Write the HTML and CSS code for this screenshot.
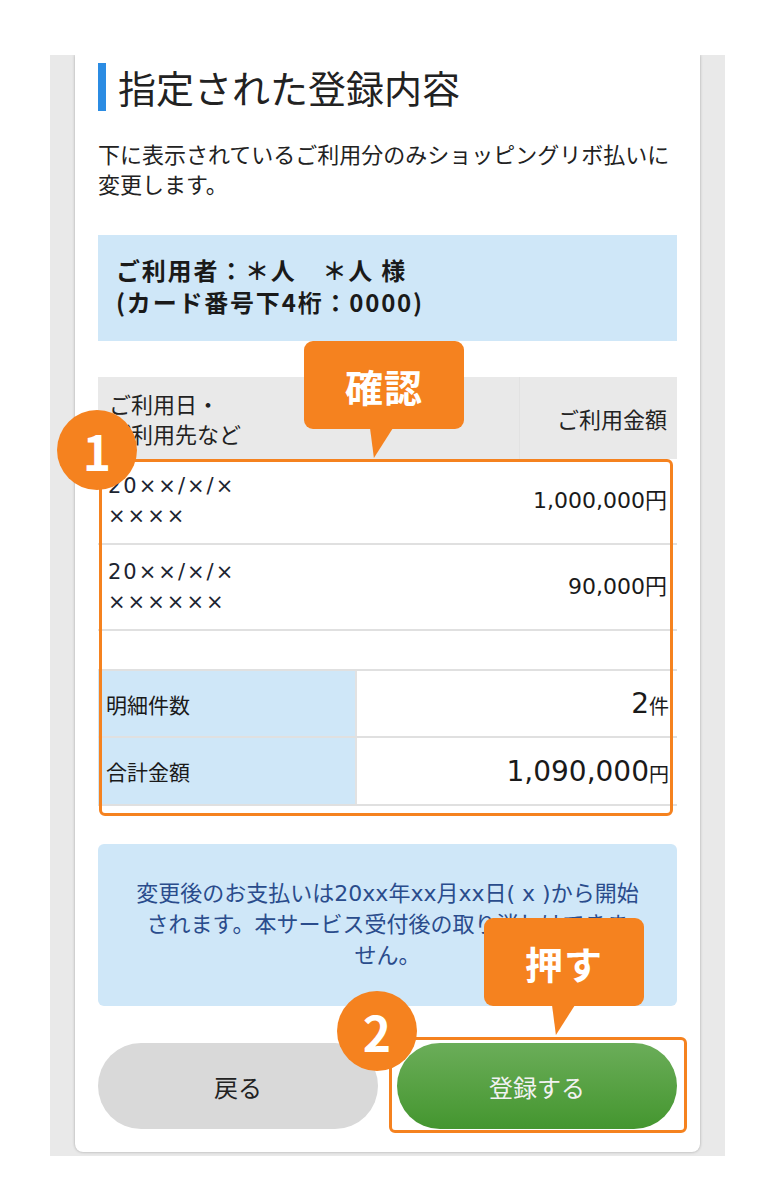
FILE: index.html
```html
<!DOCTYPE html>
<html lang="ja">
<head>
<meta charset="utf-8">
<title>指定された登録内容</title>
<link rel="stylesheet" href="styles.css">
</head>
<body>
<div class="frame">
  <div class="card">
    <h1 class="title">指定された登録内容</h1>
    <p class="lead">下に表示されているご利用分のみショッピングリボ払いに<br>変更します。</p>
    <div class="user">ご利用者：＊人　＊人 様<br>(カード番号下4桁：0000)</div>

    <div class="detail">
      <div class="d-head">
        <div class="d-left">ご利用日・<br>ご利用先など</div>
        <div class="d-right">ご利用金額</div>
      </div>
      <div class="d-row">
        <div class="d-left">20××/×/×<br>××××</div>
        <div class="d-amount">1,000,000円</div>
      </div>
      <div class="d-row">
        <div class="d-left">20××/×/×<br>××××××</div>
        <div class="d-amount">90,000円</div>
      </div>
      <div class="d-spacer"></div>
      <div class="sum-row">
        <div class="sum-label">明細件数</div>
        <div class="sum-val"><span class="num">2</span><span class="unit">件</span></div>
      </div>
      <div class="sum-row last">
        <div class="sum-label">合計金額</div>
        <div class="sum-val"><span class="num">1,090,000</span><span class="unit">円</span></div>
      </div>
    </div>

    <div class="notice">変更後のお支払いは20xx年xx月xx日( x )から開始<br>されます。本サービス受付後の取り消しはできま<br>せん。</div>

    <div class="actions">
      <button class="btn btn-back" type="button">戻る</button>
      <button class="btn btn-submit" type="button">登録する</button>
    </div>
  </div>

  <div class="mark-box box1"></div>
  <div class="bubble bubble1">確認</div>
  <div class="step step1">1</div>

  <div class="mark-box box2"></div>
  <div class="bubble bubble2">押す</div>
  <div class="step step2">2</div>
</div>
</body>
</html>
```
FILE: styles.css
```css
* { box-sizing: border-box; }

body {
  margin: 0;
  background: #fff;
  font-family: "Noto Sans CJK JP", "Noto Sans", sans-serif;
  color: #222;
}

.frame {
  position: relative;
  margin: 55px 0 0 50px;
  width: 675px;
  height: 1101px;
  background: #e9e9e9;
  overflow: hidden;
}

.card {
  margin: 0 25px;
  height: 1097px;
  background: #fff;
  border-radius: 0 0 8px 8px;
  box-shadow: 0 0 3px rgba(0, 0, 0, 0.3);
  padding: 8px 23px 0;
}

.title {
  margin: 0;
  border-left: 8px solid #2b8ce3;
  padding-left: 12px;
  font-size: 38px;
  line-height: 48px;
  font-weight: 400;
  color: #222;
  white-space: nowrap;
}

.lead {
  margin: 27px 0 0;
  font-size: 22px;
  line-height: 30px;
  white-space: nowrap;
}

.user {
  margin-top: 37px;
  background: #cfe7f8;
  padding: 19px 18px 23px;
  font-size: 24px;
  line-height: 32px;
  letter-spacing: 1.8px;
  font-weight: 700;
  color: #1a1a1a;
  white-space: nowrap;
}

.detail {
  margin-top: 36px;
}

.d-head,
.d-row {
  display: flex;
  justify-content: space-between;
  align-items: center;
}

.d-head {
  background: #e9e9e9;
  height: 82px;
  font-size: 22px;
  line-height: 30px;
  color: #222;
}

.d-head .d-left {
  padding-left: 11px;
}

.d-head .d-right {
  align-self: stretch;
  display: flex;
  align-items: center;
  width: 158px;
  justify-content: flex-end;
  padding-right: 10px;
  border-left: 1px solid #e2e2e2;
}

.d-row {
  height: 86px;
  border-bottom: 2px solid #e0e0e0;
  font-family: "DejaVu Sans", "Noto Sans CJK JP", sans-serif;
  line-height: 30px;
  color: #1c2430;
}

.d-row .d-left {
  padding-left: 10px;
  font-size: 21px;
  letter-spacing: 2px;
}

.d-amount {
  padding-right: 10px;
  font-size: 22px;
  color: #1a1a1a;
}

.d-spacer {
  height: 38px;
}

.sum-row {
  display: grid;
  grid-template-columns: 259px 1fr;
  height: 67px;
  border-top: 2px solid #e0e0e0;
}

.sum-row.last {
  border-bottom: 2px solid #e0e0e0;
  height: 70px;
}

.sum-label {
  background: #cfe7f8;
  border-right: 2px solid #e2e2e2;
  display: flex;
  align-items: center;
  padding-left: 8px;
  font-size: 21px;
  color: #1a1a1a;
}

.sum-val {
  display: flex;
  align-items: center;
  justify-content: flex-end;
  padding-right: 8px;
  color: #1a1a1a;
}

.sum-val .num {
  font-family: "DejaVu Sans", sans-serif;
  font-size: 28px;
}

.sum-val .unit {
  font-size: 20px;
  margin-top: 4px;
}

.notice {
  margin-top: 38px;
  background: #cfe7f8;
  border-radius: 6px;
  padding: 34px 10px 35px;
  text-align: center;
  font-family: "DejaVu Sans", "Noto Sans CJK JP", sans-serif;
  font-size: 22px;
  line-height: 31px;
  color: #2a4c8c;
  white-space: nowrap;
}

.actions {
  margin-top: 37px;
  display: grid;
  grid-template-columns: 1fr 1fr;
  gap: 19px;
}

.btn {
  height: 86px;
  border: 0;
  border-radius: 43px;
  font-family: "Noto Sans CJK JP", sans-serif;
  font-size: 24px;
  font-weight: 400;
}

.btn-back {
  background: #d9d9d9;
  color: #222;
}

.btn-submit {
  background: linear-gradient(#6bad59, #44962f);
  color: #f2f2f2;
}

/* annotation overlays */
.mark-box {
  position: absolute;
  border: 3px solid #f5821f;
  border-radius: 6px;
}

.box1 {
  left: 49px;
  top: 404px;
  width: 574px;
  height: 357px;
}

.box2 {
  left: 339px;
  top: 982px;
  width: 298px;
  height: 96px;
}

.bubble {
  position: absolute;
  width: 160px;
  height: 88px;
  background: #f5821f;
  border-radius: 9px;
  color: #fff;
  font-size: 38px;
  font-weight: 700;
  display: flex;
  align-items: center;
  justify-content: center;
  letter-spacing: 1px;
}

.bubble::after {
  content: "";
  position: absolute;
  top: 87px;
  width: 23px;
  height: 30px;
  background: #f5821f;
  clip-path: polygon(0 0, 100% 0, 17% 100%);
}

.bubble1 {
  left: 254px;
  top: 286px;
}

.bubble1::after {
  left: 66px;
}

.bubble2 {
  left: 434px;
  top: 863px;
}

.bubble2::after {
  left: 68px;
}

.step {
  position: absolute;
  width: 80px;
  height: 80px;
  border-radius: 50%;
  background: #f5821f;
  color: #fff;
  font-size: 48px;
  font-weight: 700;
  line-height: 80px;
  text-align: center;
}

.step1 {
  left: 7px;
  top: 355px;
}

.step2 {
  left: 287px;
  top: 936px;
}
```
